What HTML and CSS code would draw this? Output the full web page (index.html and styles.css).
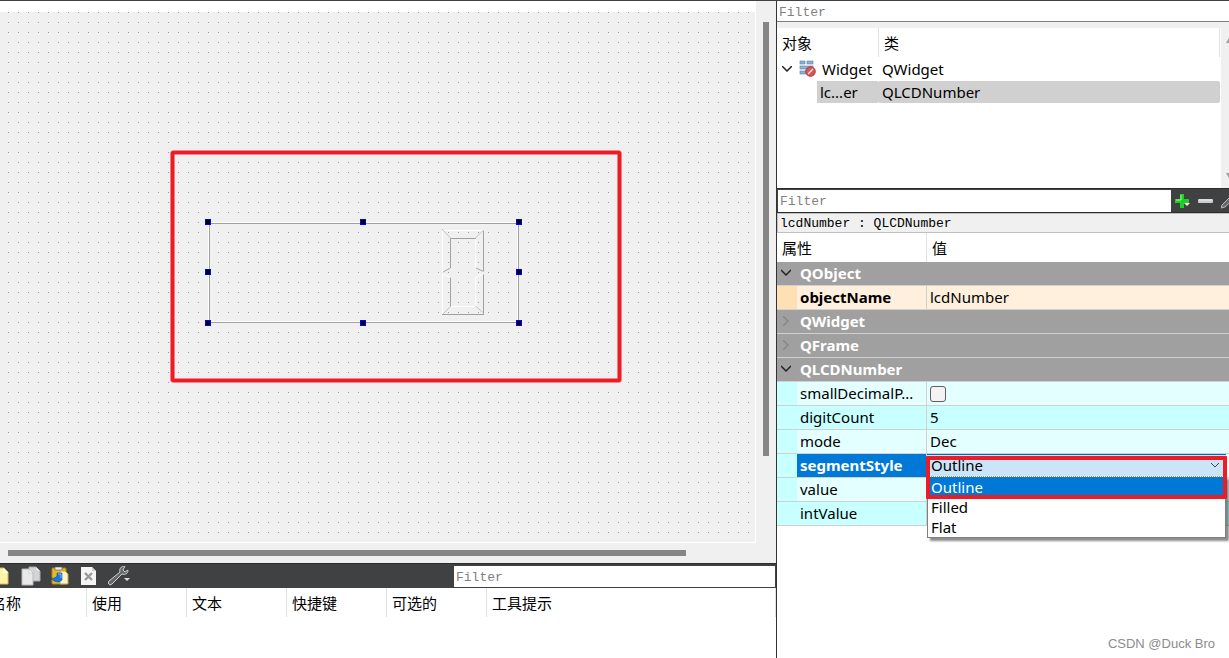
FILE: index.html
```html
<!DOCTYPE html>
<html lang="zh-CN">
<head>
<meta charset="utf-8">
<title>Widget - Qt Designer</title>
<link rel="stylesheet" href="styles.css">
</head>
<body>
<div class="app">
  <main class="left">
    <section class="editor">
      <div class="form-area">
        <svg class="form" role="img" aria-label="LCD number form">
          <defs>
            <pattern id="dots" width="10" height="10" patternUnits="userSpaceOnUse">
              <rect x="8" y="0" width="1" height="1" fill="#9a9a9a"/>
            </pattern>
          </defs>
          <rect width="100%" height="100%" fill="#f0f0f0"/>
          <rect width="100%" height="100%" fill="url(#dots)"/>
          <rect x="172.5" y="140.5" width="447" height="228" rx="1" fill="none" stroke="#f6a9ad" stroke-width="5"/>
          <rect x="172.5" y="140.5" width="447" height="228" rx="1" fill="none" stroke="#ed1c24" stroke-width="3.6"/>
          <g fill="none" shape-rendering="crispEdges">
            <path d="M208.500 310V210.500H518M517.500 211V309.500H209" stroke="#fff"/>
            <path d="M209.500 310V211.500H517M518.500 211V310.500H209" stroke="#a0a0a0"/>
            <path d="M442.500 219V260M442.500 262V302" stroke="#fff"/>
            <path d="M444 218.500H483M475.500 227V256M475.500 265V294M451 294.500H475" stroke="#fff"/>
            <path d="M450.500 256V226.500H475.500M450.500 265V294M483.500 219V259M483.500 262V302.500H442" stroke="#a0a0a0"/>
          </g>
          <g fill="none" stroke="#c4c4c4">
            <path d="M442 217L451 226.500M483.500 218L475 226.500M443 302L451 294M483.500 301L475.500 294"/>
            <path d="M450.500 256L443 260M476 256L483.500 259.500" stroke="#a8a8a8"/>
            <path d="M443 262L450.500 265.500M483.500 262L475.500 265.500" stroke="#fff"/>
          </g>
          <g fill="#000" stroke="#00f">
            <rect x="205.500" y="207.500" width="5" height="5"/><rect x="360.500" y="207.500" width="5" height="5"/><rect x="516.500" y="207.500" width="5" height="5"/>
            <rect x="205.500" y="257.500" width="5" height="5"/><rect x="516.500" y="257.500" width="5" height="5"/>
            <rect x="205.500" y="308.500" width="5" height="5"/><rect x="360.500" y="308.500" width="5" height="5"/><rect x="516.500" y="308.500" width="5" height="5"/>
          </g>
        </svg>
      </div>
      <div class="vscroll"><div class="vthumb"></div></div>
      <div class="hscroll"><div class="hthumb"></div></div>
    </section>
    <section class="actions">
      <div class="toolbar">
        <button class="tool" aria-label="New"><svg width="20" height="20" viewBox="0 0 20 20"><path d="M0 2H12L16 6V18H0Z" fill="#fff3a8" stroke="#d8bc55"/><path d="M11 2V7H16Z" fill="#fffef0"/></svg></button>
        <button class="tool" aria-label="Copy"><svg width="20" height="20" viewBox="0 0 20 20"><path d="M8 1H15L19 5V15H8Z" fill="#d4d4d4" stroke="#aaa"/><path d="M1 3H8L12 7V19H1Z" fill="#e9e9e9" stroke="#b9b9b9"/><path d="M8 3V7H12ZM15 1V5H19Z" fill="#fff" stroke="#bbb" stroke-width=".6"/></svg></button>
        <button class="tool" aria-label="Paste"><svg width="20" height="20" viewBox="0 0 20 20"><rect x="2" y="2" width="14" height="16" rx="1" fill="#e8b923" stroke="#b4860b"/><rect x="5" y="1" width="7" height="3" fill="#eee" stroke="#555" stroke-width=".6"/><path d="M10 5H15L18 8V18H10Z" fill="#fbf4cf" stroke="#c5a63e"/><path d="M1 12C3 13 5 12 7 10V7H12V14L9 16C6 16 3 15 1 12Z" fill="#1976df" stroke="#0a4ea0" stroke-width=".6"/><path d="M8 8H11V12" fill="none" stroke="#7fc0ff"/></svg></button>
        <button class="tool" aria-label="Delete"><svg width="20" height="20" viewBox="0 0 20 20"><path d="M2 1H13L17 5V19H2Z" fill="#f4f4f4"/><path d="M13 1V5H17Z" fill="#ccc"/><path d="M6 7L13 14M13 7L6 14" stroke="#999" stroke-width="2.4"/></svg></button>
        <button class="tool" aria-label="Configure"><svg width="24" height="20" viewBox="0 0 24 20"><path d="M2 19C0 18 0 16 1 15L12 6C11 3 13 0 17 0L15 4L17 6L20 4C20 8 17 9 14 8L4 18Z" fill="#66696b" stroke="#d0d0d0"/><path d="M16 12H22L19 15Z" fill="#ddd"/></svg></button>
        <input class="filter filter-actions" type="text" placeholder="Filter" aria-label="Filter actions">
      </div>
      <table class="action-table">
        <thead><tr><th>名称</th><th>使用</th><th>文本</th><th>快捷键</th><th>可选的</th><th class="rest">工具提示</th></tr></thead>
      </table>
    </section>
  </main>
  <aside class="right">
    <input class="filter filter-objects" type="text" placeholder="Filter" aria-label="Filter objects">
    <section class="objects">
      <table class="tree">
        <thead><tr><th class="tree-name">对象</th><th>类</th></tr></thead>
        <tbody>
          <tr><td><div class="tree-item"><svg width="10" height="6" viewBox="0 0 10 6"><path d="M0 0L5 5L10 0" fill="none" stroke="#222" stroke-width="1.500"/></svg><svg width="18" height="18" viewBox="0 0 18 18"><g fill="#88b4d8" stroke="#5b7f9f" stroke-width=".6"><rect x="2" y="1" width="5" height="3"/><rect x="9" y="1" width="6" height="3"/><rect x="2" y="6" width="13" height="3"/><rect x="2" y="11" width="8" height="3"/></g><circle cx="12.500" cy="11.500" r="4.800" fill="#d5565a" stroke="#b0383c"/><path d="M10 14L15 9" stroke="#eee" stroke-width="1.300"/></svg><span>Widget</span></div></td><td>QWidget</td></tr>
          <tr class="picked"><td><div class="child">lc...er</div></td><td>QLCDNumber</td></tr>
        </tbody>
      </table>
      <div class="tree-scroll"><svg width="8" height="7" viewBox="0 0 8 7"><path d="M4 0L8 7H0Z" fill="#a0a0a0"/></svg><svg width="8" height="7" viewBox="0 0 8 7"><path d="M0 0H8L4 7Z" fill="#a0a0a0"/></svg></div>
    </section>
    <div class="prop-bar">
      <input class="filter filter-props" type="text" placeholder="Filter" aria-label="Filter properties">
      <button class="prop-tool" aria-label="Add property"><svg width="16" height="16" viewBox="0 0 16 16"><path d="M5 1H9V6H14V10H9V15H5V10H0V6H5Z" fill="#1fd024"/><path d="M6 2V7H1" fill="none" stroke="#a6f5a2"/><path d="M9 10H15L12 13Z" fill="#eee"/></svg></button>
      <button class="prop-tool" aria-label="Remove property"><svg width="16" height="16" viewBox="0 0 16 16"><rect x="0" y="6" width="15" height="4" rx="1" fill="#ccc"/><path d="M1 7H14" stroke="#eee"/></svg></button>
      <button class="prop-tool" aria-label="Configure"><svg width="16" height="16" viewBox="0 0 16 16"><path d="M0 15L1 12L12 1L15 4L4 14Z" fill="#66696b" stroke="#bbb"/></svg></button>
    </div>
    <div class="prop-title">lcdNumber : QLCDNumber</div>
    <table class="props">
      <thead><tr><th class="prop-name">属性</th><th>值</th></tr></thead>
      <tbody>
        <tr class="group"><th colspan="2"><svg class="open" width="10" height="10" viewBox="0 0 10 10"><path d="M0 2L5 7L10 2"/></svg>QObject</th></tr>
        <tr class="cream strong"><td>objectName</td><td>lcdNumber</td></tr>
        <tr class="group"><th colspan="2"><svg width="10" height="10" viewBox="0 0 10 10"><path d="M2 0L7 5L2 10"/></svg>QWidget</th></tr>
        <tr class="group"><th colspan="2"><svg width="10" height="10" viewBox="0 0 10 10"><path d="M2 0L7 5L2 10"/></svg>QFrame</th></tr>
        <tr class="group"><th colspan="2"><svg class="open" width="10" height="10" viewBox="0 0 10 10"><path d="M0 2L5 7L10 2"/></svg>QLCDNumber</th></tr>
        <tr class="light"><td><label for="small">smallDecimalP...</label></td><td><input id="small" class="check" type="checkbox"></td></tr>
        <tr class="aqua"><td>digitCount</td><td>5</td></tr>
        <tr class="light"><td>mode</td><td>Dec</td></tr>
        <tr class="current strong"><td><label for="style">segmentStyle</label></td><td class="combo-cell">
          <div class="combo">
            <select id="style" class="combo-box"><option>Outline</option><option>Filled</option><option>Flat</option></select>
            <svg class="combo-arrow" width="10" height="6" viewBox="0 0 10 6"><path d="M1 0L5 4L9 0" fill="none" stroke="#444"/></svg>
            <ul class="popup"><li class="chosen">Outline</li><li>Filled</li><li>Flat</li></ul>
            <div class="mark"></div>
          </div></td></tr>
        <tr class="light"><td>value</td><td></td></tr>
        <tr class="aqua"><td>intValue</td><td></td></tr>
      </tbody>
    </table>
    <div class="credit">CSDN @Duck Bro</div>
  </aside>
</div>
</body>
</html>
```

FILE: styles.css
```css
* { box-sizing: border-box; }
body {
  margin: 0;
  background: #fff;
  color: #000;
  font: 15px/20px "Noto Sans", "Noto Sans CJK SC", sans-serif;
}
button { border: 0; padding: 0; background: none; display: flex; }
svg { display: block; flex: none; }
table { border-collapse: separate; border-spacing: 0; table-layout: fixed; width: 100%; }
th, td { padding: 0; text-align: left; font-weight: 400; white-space: nowrap; }

.app {
  display: grid;
  grid-template-columns: minmax(0, 1fr) 452px;
  height: 100vh;
  overflow: hidden;
  border-top: 1px solid #404142;
}
.left { display: flex; flex-direction: column; min-width: 0; border-right: 1px solid #333; }
.editor {
  flex: 1;
  display: grid;
  grid-template-columns: minmax(0, 1fr) 20px;
  grid-template-rows: minmax(0, 1fr) 20px;
  background: #f0f0f0;
}
.form-area { border: solid #fff; border-width: 11px 1px 1px 0; }
.form { width: 100%; height: 100%; }
.vscroll { padding: 21px 7px 0; }
.vthumb { height: 434px; background: #868686; }
.hscroll { padding: 7px 70px 0 8px; }
.hthumb { height: 6px; background: #868686; }

.filter {
  display: block;
  min-width: 0;
  border: 0;
  border-radius: 0;
  padding: 2px 2px 0;
  background: #fff;
  font: 13px/18px "Liberation Mono", "Noto Sans CJK SC", monospace;
}
.filter::placeholder { color: #808080; opacity: 1; }

.actions { height: 95px; background: #fff; }
.toolbar {
  display: flex;
  align-items: center;
  gap: 9px;
  height: 25px;
  background: #404142;
  border-top: 1px solid #2c2c2c;
  padding-right: 1px;
}
.tool:first-child { margin-left: -8px; }
.filter-actions { width: 321px; height: 21px; margin-left: auto; }
.action-table { width: calc(100% + 14px); margin-left: -14px; }
.action-table th, .tree th { height: 29px; padding: 0 5px; border-right: 1px solid #e2e2e2; }
.action-table th { width: 100px; }
.action-table th:first-child { width: 101px; }
.action-table .rest { width: auto; }

.right { display: flex; flex-direction: column; min-width: 0; overflow: hidden; background: #fff; }
.filter-objects { width: 100%; height: 21px; flex: none; border-bottom: 1px solid #808080; }
.objects { display: flex; height: 166px; flex: none; border-top: 6px solid #f0f0f0; }
.tree { flex: 1; min-width: 0; align-self: flex-start; }
.tree .tree-name { width: 102px; }
.tree td { height: 24px; padding-left: 3px; }
.tree-item { display: flex; align-items: center; gap: 6px; padding-left: 2px; }
.tree .picked td { height: 22px; background: #d0d0d0; border-radius: 0 2px 2px 0; }
.tree .picked td:first-child { background: linear-gradient(90deg, #fff 40px, #d0d0d0 40px); }
.child { padding-left: 40px; }
.tree-scroll {
  width: 9px;
  padding: 8px 0;
  background: #f0f0f0;
  border-left: 1px solid #fff;
  display: flex;
  flex-direction: column;
  justify-content: space-between;
}
.tree-scroll svg { margin-left: 5px; }

.prop-bar {
  display: flex;
  flex: none;
  align-items: center;
  gap: 7px;
  height: 25px;
  padding-left: 1px;
  background: #404142;
  border: solid #2c2c2c;
  border-width: 1px 0;
}
.filter-props { flex: none; width: 393px; height: 22px; margin-right: -3px; }
.prop-title {
  flex: none;
  height: 20px;
  padding: 1px 2px 0;
  background: #f0f0f0;
  border: 1px solid #c0c0c0;
  border-right: 0;
  font: 13px/18px "Liberation Mono", "Noto Sans CJK SC", monospace;
}

.props thead th { height: 29px; padding: 0 5px; }
.props .prop-name { width: 150px; border-right: 1px solid #e2e2e2; }
.props tbody tr > * { height: 24px; line-height: 23px; border-bottom: 1px solid #d0d0d0; padding-left: 3px; }
.props tbody td:first-child { padding-left: 23px; border-right: 1px solid #d0d0d0; }
.props .group th { background: #a0a0a0; color: #fff; font-weight: 700; padding-left: 23px; }
.group svg { float: left; margin: 6px 0 0 -19px; }
.group path { fill: none; stroke: #888; stroke-width: 1.5; }
.group .open path { stroke: #222; }
.props .strong td:first-child { font-weight: 700; }
.cream td { background: #fff0dd; }
.cream td:first-child { background: linear-gradient(90deg, #ffe0b5 20px, #fff0dd 20px); }
.light td { background: #e4ffff; }
.light td:first-child { background: linear-gradient(90deg, #c8ffff 20px, #e4ffff 20px); }
.aqua td { background: #c8ffff; }
.current td:first-child { color: #fff; background: linear-gradient(90deg, #c8ffff 20px, #0078d7 20px); }
.check {
  display: block;
  appearance: none;
  width: 16px;
  height: 16px;
  margin: 0;
  border: 1px solid #606060;
  border-radius: 3px;
  background: #f3f3f3;
}

.props tbody .combo-cell { padding: 0 3px 0 0; }
.combo { position: relative; height: 23px; }
.combo-box {
  display: block;
  appearance: none;
  width: 100%;
  height: 23px;
  padding: 0 4px 2px;
  border: 0;
  border-top: 1px solid #0067c0;
  border-radius: 0;
  background: #cce4f7;
  color: #000;
  font: inherit;
  line-height: 20px;
}
.combo-arrow { position: absolute; right: 6px; top: 9px; }
.popup {
  position: absolute;
  z-index: 1;
  top: 22px;
  left: 0;
  right: 0;
  margin: 0;
  padding: 0;
  list-style: none;
  background: #fff;
  border: 1px solid #808080;
  border-top: 1px dotted #b99a70;
  box-shadow: 3px 3px 2px rgba(0, 0, 0, .45);
}
.popup li { height: 20px; padding-left: 3px; line-height: 20px; }
.popup .chosen { background: #0078d7; color: #fff; }
.mark {
  position: absolute;
  z-index: 2;
  inset: 2px -1px -22px -1px;
  border: 4px solid #ed1c24;
  border-radius: 1px;
  pointer-events: none;
}
.credit {
  margin-top: auto;
  padding: 0 14px 4px 0;
  text-align: right;
  color: #8c8c8c;
  font: 13px/20px "Liberation Sans", Arial, sans-serif;
}
```
